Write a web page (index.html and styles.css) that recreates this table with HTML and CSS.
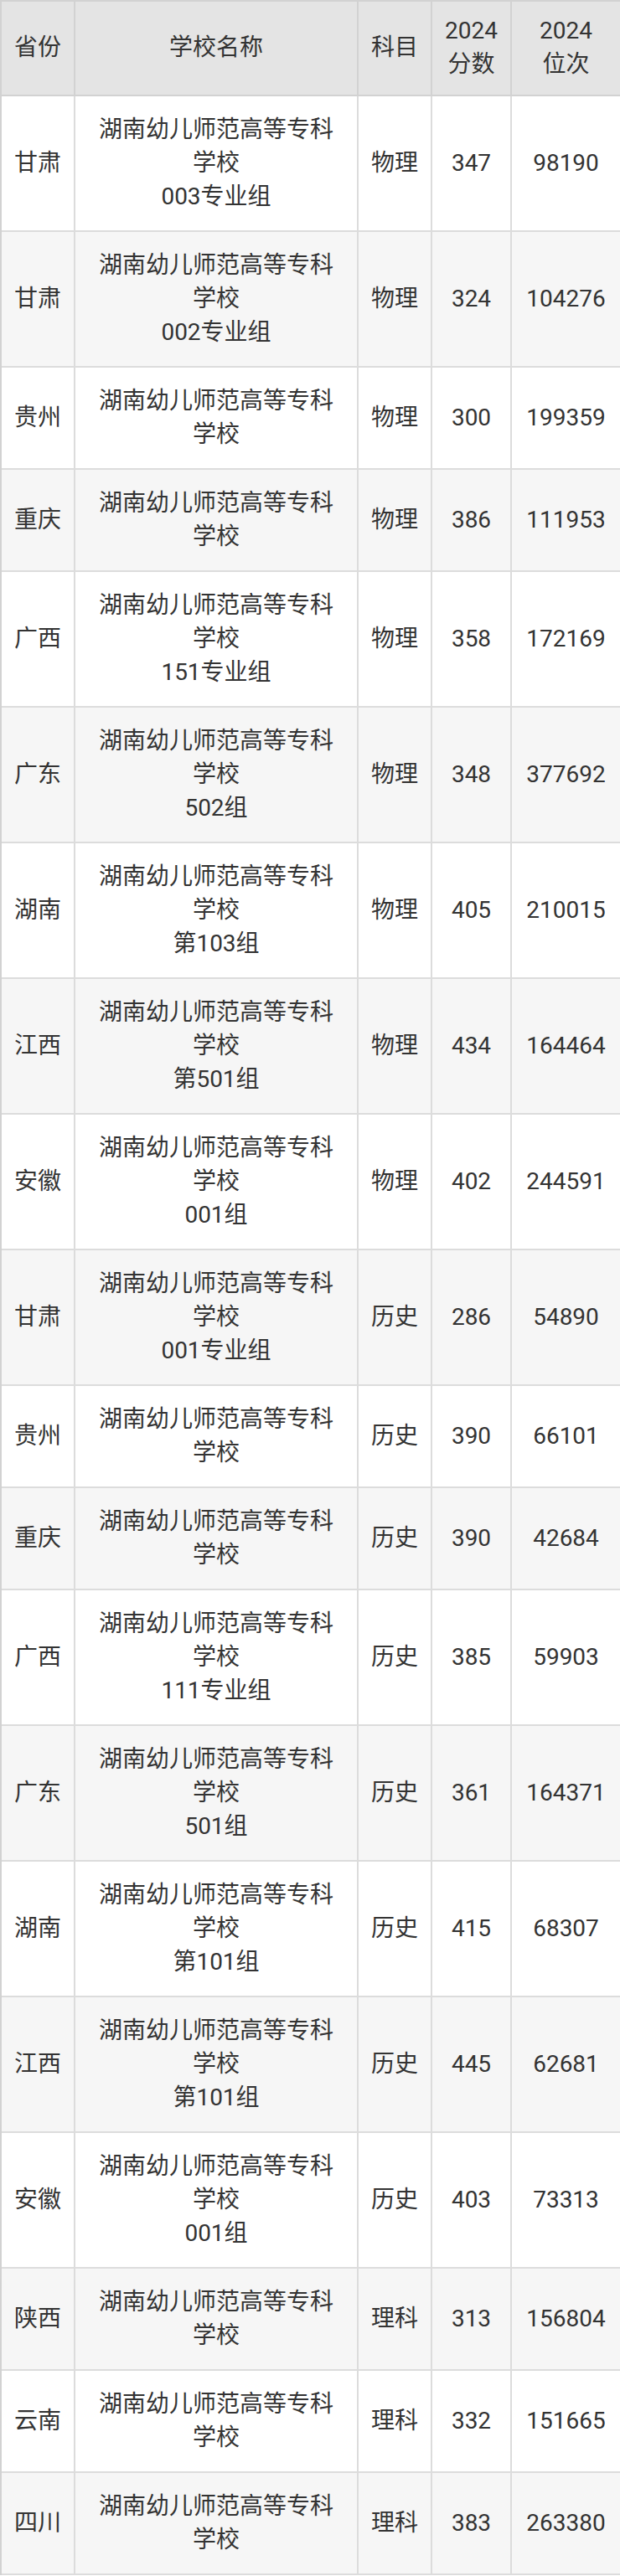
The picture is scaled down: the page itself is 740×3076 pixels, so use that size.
FILE: index.html
```html
<!DOCTYPE html>
<html lang="zh-CN">
<head>
<meta charset="utf-8">
<title>湖南幼儿师范高等专科学校 2024 录取分数</title>
<link rel="stylesheet" href="styles.css">
</head>
<body>
<table class="score-table">
  <thead>
    <tr>
      <th class="c-prov">省份</th>
      <th class="c-school">学校名称</th>
      <th class="c-subj">科目</th>
      <th class="c-score">2024<br>分数</th>
      <th class="c-rank">2024<br>位次</th>
    </tr>
  </thead>
  <tbody>
    <tr><td>甘肃</td><td>湖南幼儿师范高等专科学校<br>003专业组</td><td>物理</td><td>347</td><td>98190</td></tr>
    <tr><td>甘肃</td><td>湖南幼儿师范高等专科学校<br>002专业组</td><td>物理</td><td>324</td><td>104276</td></tr>
    <tr><td>贵州</td><td>湖南幼儿师范高等专科学校</td><td>物理</td><td>300</td><td>199359</td></tr>
    <tr><td>重庆</td><td>湖南幼儿师范高等专科学校</td><td>物理</td><td>386</td><td>111953</td></tr>
    <tr><td>广西</td><td>湖南幼儿师范高等专科学校<br>151专业组</td><td>物理</td><td>358</td><td>172169</td></tr>
    <tr><td>广东</td><td>湖南幼儿师范高等专科学校<br>502组</td><td>物理</td><td>348</td><td>377692</td></tr>
    <tr><td>湖南</td><td>湖南幼儿师范高等专科学校<br>第103组</td><td>物理</td><td>405</td><td>210015</td></tr>
    <tr><td>江西</td><td>湖南幼儿师范高等专科学校<br>第501组</td><td>物理</td><td>434</td><td>164464</td></tr>
    <tr><td>安徽</td><td>湖南幼儿师范高等专科学校<br>001组</td><td>物理</td><td>402</td><td>244591</td></tr>
    <tr><td>甘肃</td><td>湖南幼儿师范高等专科学校<br>001专业组</td><td>历史</td><td>286</td><td>54890</td></tr>
    <tr><td>贵州</td><td>湖南幼儿师范高等专科学校</td><td>历史</td><td>390</td><td>66101</td></tr>
    <tr><td>重庆</td><td>湖南幼儿师范高等专科学校</td><td>历史</td><td>390</td><td>42684</td></tr>
    <tr><td>广西</td><td>湖南幼儿师范高等专科学校<br>111专业组</td><td>历史</td><td>385</td><td>59903</td></tr>
    <tr><td>广东</td><td>湖南幼儿师范高等专科学校<br>501组</td><td>历史</td><td>361</td><td>164371</td></tr>
    <tr><td>湖南</td><td>湖南幼儿师范高等专科学校<br>第101组</td><td>历史</td><td>415</td><td>68307</td></tr>
    <tr><td>江西</td><td>湖南幼儿师范高等专科学校<br>第101组</td><td>历史</td><td>445</td><td>62681</td></tr>
    <tr><td>安徽</td><td>湖南幼儿师范高等专科学校<br>001组</td><td>历史</td><td>403</td><td>73313</td></tr>
    <tr><td>陕西</td><td>湖南幼儿师范高等专科学校</td><td>理科</td><td>313</td><td>156804</td></tr>
    <tr><td>云南</td><td>湖南幼儿师范高等专科学校</td><td>理科</td><td>332</td><td>151665</td></tr>
    <tr><td>四川</td><td>湖南幼儿师范高等专科学校</td><td>理科</td><td>383</td><td>263380</td></tr>
  </tbody>
</table>
</body>
</html>
```

FILE: styles.css
```css
html, body {
  margin: 0;
  padding: 0;
  background: #ffffff;
}

.score-table {
  width: 740px;
  table-layout: fixed;
  border-collapse: separate;
  border-spacing: 0;
  border-top: 2px solid #d2d2d2;
  border-left: 2px solid #d2d2d2;
  font-family: Roboto, "Noto Sans CJK SC", sans-serif;
  font-size: 28px;
  line-height: 40px;
  color: #333333;
}

.score-table th,
.score-table td {
  box-sizing: border-box;
  text-align: center;
  vertical-align: middle;
  border-right: 2px solid #dcdcdc;
  border-bottom: 2px solid #dcdcdc;
  padding: 20px 0;
  font-weight: normal;
}

.score-table th {
  background: #e4e4e4;
  border-color: #d2d2d2;
  padding: 15px 0 16px;
}

.score-table th:last-child,
.score-table td:last-child {
  border-right: none;
}

.score-table tbody tr:nth-child(even) td {
  background: #f6f6f6;
}

.c-prov { width: 88px; }
.c-school { width: 338px; padding-left: 18px !important; padding-right: 18px !important; }
.c-subj { width: 88px; }
.c-score { width: 95px; }
.c-rank { width: 129px; }

.score-table td:nth-child(2) {
  padding-left: 24px;
  padding-right: 24px;
}
```
